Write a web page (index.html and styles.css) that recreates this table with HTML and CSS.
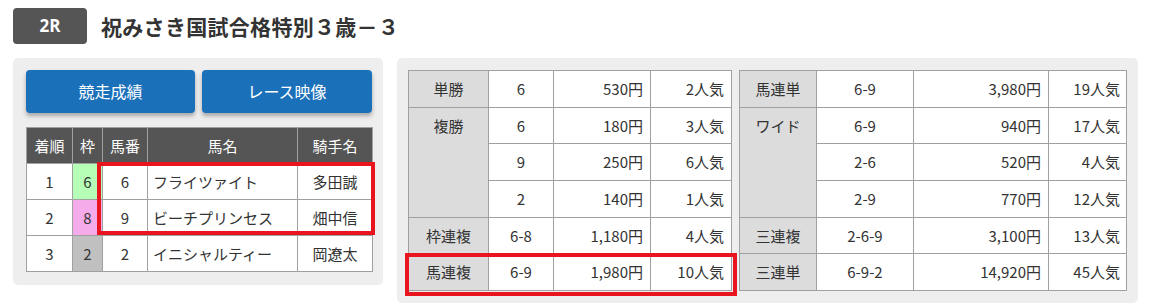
FILE: index.html
```html
<!DOCTYPE html>
<html lang="ja">
<head>
<meta charset="utf-8">
<link rel="stylesheet" href="styles.css">
</head>
<body>
<div class="page">
  <div class="race-head">
    <div class="race-no">2R</div>
    <h1 class="race-title">祝みさき国試合格特別３歳－３</h1>
  </div>
  <div class="content">
    <div class="panel panel-left">
      <div class="buttons">
        <a class="btn">競走成績</a>
        <a class="btn">レース映像</a>
      </div>
      <div class="table-wrap result-wrap">
        <table class="result">
          <colgroup><col class="c1"><col class="c2"><col class="c3"><col class="c4"><col class="c5"></colgroup>
          <thead>
            <tr><th class="c1">着順</th><th class="c2">枠</th><th class="c3">馬番</th><th class="c4">馬名</th><th class="c5">騎手名</th></tr>
          </thead>
          <tbody>
            <tr><td>1</td><td class="waku waku6">6</td><td>6</td><td class="name">フライツァイト</td><td>多田誠</td></tr>
            <tr><td>2</td><td class="waku waku8">8</td><td>9</td><td class="name">ビーチプリンセス</td><td>畑中信</td></tr>
            <tr><td>3</td><td class="waku waku2">2</td><td>2</td><td class="name">イニシャルティー</td><td>岡遼太</td></tr>
          </tbody>
        </table>
        <div class="mark mark-left"></div>
      </div>
    </div>
    <div class="panel panel-right">
      <div class="table-wrap pay-wrap1">
        <table class="pay pay1">
          <colgroup><col class="p1"><col class="p2"><col class="p3"><col class="p4"></colgroup>
          <tr class="grp"><th>単勝</th><td class="num">6</td><td class="yen">530円</td><td class="pop">2人気</td></tr>
          <tr class="grp"><th rowspan="3">複勝</th><td class="num">6</td><td class="yen">180円</td><td class="pop">3人気</td></tr>
          <tr class="sub"><td class="num">9</td><td class="yen">250円</td><td class="pop">6人気</td></tr>
          <tr class="sub"><td class="num">2</td><td class="yen">140円</td><td class="pop">1人気</td></tr>
          <tr class="grp"><th>枠連複</th><td class="num">6-8</td><td class="yen">1,180円</td><td class="pop">4人気</td></tr>
          <tr class="grp"><th>馬連複</th><td class="num">6-9</td><td class="yen">1,980円</td><td class="pop">10人気</td></tr>
        </table>
        <div class="mark mark-right"></div>
      </div>
      <div class="table-wrap">
        <table class="pay pay2">
          <colgroup><col class="q1"><col class="q2"><col class="q3"><col class="q4"></colgroup>
          <tr class="grp"><th>馬連単</th><td class="num">6-9</td><td class="yen">3,980円</td><td class="pop">19人気</td></tr>
          <tr class="grp"><th rowspan="3">ワイド</th><td class="num">6-9</td><td class="yen">940円</td><td class="pop">17人気</td></tr>
          <tr class="sub"><td class="num">2-6</td><td class="yen">520円</td><td class="pop">4人気</td></tr>
          <tr class="sub"><td class="num">2-9</td><td class="yen">770円</td><td class="pop">12人気</td></tr>
          <tr class="grp"><th>三連複</th><td class="num">2-6-9</td><td class="yen">3,100円</td><td class="pop">13人気</td></tr>
          <tr class="grp"><th>三連単</th><td class="num">6-9-2</td><td class="yen">14,920円</td><td class="pop">45人気</td></tr>
        </table>
      </div>
    </div>
  </div>
</div>
</body>
</html>
```
FILE: styles.css
```css
* { box-sizing: border-box; }
html, body { margin: 0; padding: 0; background: #fff; }
body {
  font-family: "Noto Sans CJK JP", "Noto Sans", sans-serif;
  color: #333;
  font-size: 15px;
}
.page { padding: 8px 12px 0 13px; }
.race-head { display: flex; align-items: center; height: 36px; }
.race-no {
  width: 74px; height: 36px;
  background: #555;
  border-radius: 4px;
  color: #fff;
  font-weight: bold;
  font-size: 17px;
  line-height: 36px;
  text-align: center;
  font-family: "Open Sans", "Noto Sans", sans-serif;
}
.race-title {
  margin: 0 0 0 14px;
  font-size: 21px;
  font-weight: bold;
  line-height: 36px;
  letter-spacing: 0.3px;
  color: #333;
}
.content { display: flex; align-items: flex-start; margin-top: 14px; }
.panel { background: #eee; border-radius: 5px; }
.panel-left { width: 370px; padding: 12px 11px 13px 13px; }
.panel-right {
  width: 741px; margin-left: 14px;
  padding: 12px 13px 12px 11px;
  display: flex; gap: 7px; align-items: flex-start;
}
.buttons { display: grid; grid-template-columns: 169px 170px; gap: 7px; }
.btn {
  display: block; height: 43px;
  background: #1b70ba;
  border-radius: 4px;
  color: #fff;
  font-size: 16px;
  line-height: 43px;
  text-align: center;
  box-shadow: 0 3px 4px rgba(0,0,0,0.3);
}
.table-wrap { position: relative; }
.result-wrap { margin-top: 14px; }
table { border-collapse: collapse; table-layout: fixed; background: #fff; }
.result { width: 346px; }
.c1 { width: 46px; } .c2 { width: 30px; } .c3 { width: 45px; } .c4 { width: 150px; } .c5 { width: 75px; }
.result th, .result td {
  border: 1px solid #a0a0a0;
  height: 36px;
  padding: 0;
  text-align: center;
  line-height: 20px;
  font-weight: normal;
  white-space: nowrap;
}
.result th { background: #555; color: #fff; border-color: #a0a0a0; }
.result tbody tr + tr td { border-top: 1px dotted #999; }
.result td.name { text-align: left; padding-left: 5px; }
.waku6 { background: #b6ffb6; }
.waku8 { background: #f5aaea; }
.waku2 { background: #c0c0c0; }
.mark {
  position: absolute;
  border: 4px solid #e8151f;
  pointer-events: none;
}
.mark-left { left: 71px; top: 35px; width: 278px; height: 73px; }
.mark-right { left: -3px; top: 183px; width: 332px; height: 43px; }
.pay th, .pay td {
  border: 1px solid #a0a0a0;
  height: 36.7px;
  padding: 0;
  line-height: 20px;
  white-space: nowrap;
}
.pay th {
  background: #dcdcdc;
  font-weight: normal;
  text-align: center;
  vertical-align: top;
  padding-top: 8px;
}
.pay tr.sub td { border-top: 1px dotted #999; }
.pay td.num { text-align: center; }
.pay td.yen { text-align: right; padding-right: 7px; }
.pay td.pop { text-align: right; padding-right: 7px; }
.pay1 { width: 323px; }
.p1 { width: 80px; } .p2 { width: 65px; } .p3 { width: 97px; } .p4 { width: 81px; }
.pay2 { width: 387px; }
.pay2 td.pop { padding-right: 6px; }
.q1 { width: 77px; } .q2 { width: 97px; } .q3 { width: 135px; } .q4 { width: 78px; }
```
